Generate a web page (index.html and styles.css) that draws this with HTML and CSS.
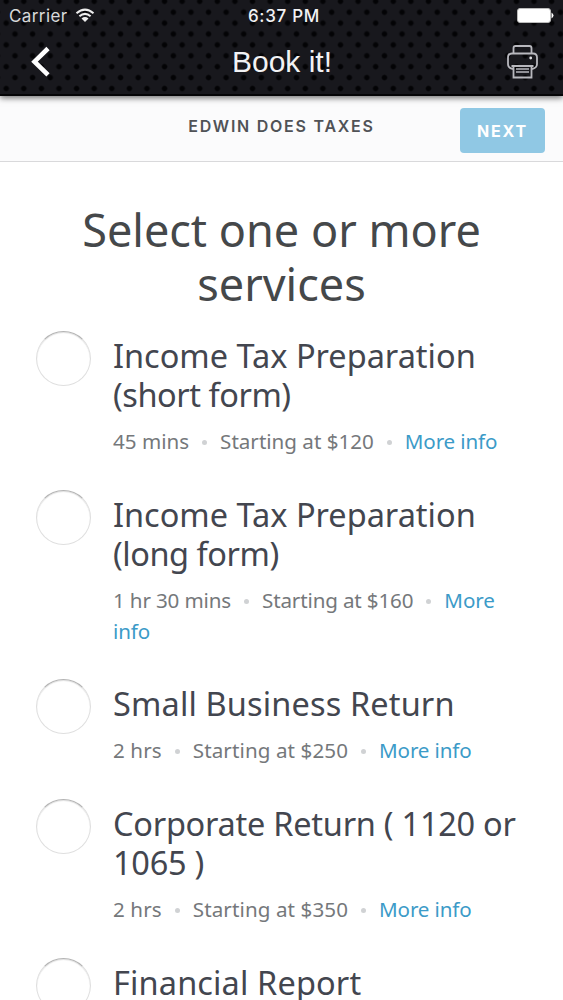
FILE: index.html
```
<!DOCTYPE html>
<html lang="en">

<head>
    <meta charset="UTF-8">
    <meta name="viewport" content="width=device-width, initial-scale=1.0">
    <title>Book it!</title>
    <link rel="stylesheet" href="styles.css">
</head>

<body>
    <header class="top">
        <div class="status">
            <div class="carrier">
                <span>Carrier</span>
                <svg width="20" height="15" viewBox="0 0 20 15">
                    <path d="M1.5 5.2 Q10 -2 18.5 5.2 M4.4 8.2 Q10 3.6 15.6 8.2" fill="none" stroke="#eee" stroke-width="2" />
                    <path d="M6.5 10.5 Q10 7.6 13.5 10.5 L10 14 Z" fill="#eee" />
                </svg>
            </div>
            <span class="time">6:37 PM</span>
            <svg class="battery" width="38" height="15" viewBox="0 0 38 15">
                <rect x="0.5" y="0.5" width="33" height="14" rx="2.5" fill="#fff" stroke="#bbb" />
                <path d="M34.5 4.5 Q38.5 7.5 34.5 10.5 Z" fill="#fff" />
            </svg>
        </div>
        <div class="nav">
            <svg class="back" width="22" height="32" viewBox="0 0 22 32">
                <path d="M20 2.5 L6.5 15.7 L20 28.9" fill="none" stroke="#fff" stroke-width="4.6" />
            </svg>
            <span class="nav-title">Book it!</span>
            <svg class="print" width="32" height="34" viewBox="0 0 32 34" fill="none" stroke="#b8b8be" stroke-width="1.8">
                <path d="M6.5 8.5 V3 Q6.5 1 8.5 1 H22.5 Q24.5 1 24.5 3 V8.5" />
                <path d="M6 24 Q1 23 1 19 V12.5 Q1 8.5 5 8.5 H26 Q30 8.5 30 12.5 V19 Q30 23 25 24" />
                <path d="M4.5 21 H26.5 M6.5 21 V32.5 H24.5 V21" />
                <path d="M9 24 H22 M9 27 H22" stroke-width="1.4" />
                <circle cx="23.7" cy="13" r="1.4" fill="#e0e0e4" stroke="none" />
            </svg>
        </div>
    </header>

    <div class="bar">
        <span class="business">EDWIN DOES TAXES</span>
        <button class="next">NEXT</button>
    </div>

    <main>
        <h1>Select one or more services</h1>
        <ul class="services">
            <li class="service">
                <span class="radio"></span>
                <div>
                    <h2>Income Tax Preparation <span class="narrow">(short form)</span></h2>
                    <p>45 mins<i class="dot"></i>Starting at $120<i class="dot"></i><a>More info</a></p>
                </div>
            </li>
            <li class="service two-line">
                <span class="radio"></span>
                <div>
                    <h2>Income Tax Preparation <span class="narrow">(long form)</span></h2>
                    <p>1 hr 30 mins<i class="dot"></i>Starting at $160<i class="dot"></i><a>More info</a></p>
                </div>
            </li>
            <li class="service short">
                <span class="radio"></span>
                <div>
                    <h2 class="wide">Small Business Return</h2>
                    <p>2 hrs<i class="dot"></i>Starting at $250<i class="dot"></i><a>More info</a></p>
                </div>
            </li>
            <li class="service short">
                <span class="radio"></span>
                <div>
                    <h2 class="tight">Corporate Return ( 1120 or 1065 )</h2>
                    <p>2 hrs<i class="dot"></i>Starting at $350<i class="dot"></i><a>More info</a></p>
                </div>
            </li>
            <li class="service">
                <span class="radio"></span>
                <div>
                    <h2 class="wide">Financial Report</h2>
                </div>
            </li>
        </ul>
    </main>
</body>

</html>
```
FILE: styles.css
```
* {
    box-sizing: border-box;
}

body {
    margin: 0;
    height: 1000px;
    overflow: hidden;
    background-color: #fff;
    font-family: "Noto Sans", sans-serif;
}

.top {
    height: 96px;
    color: #f2f2f4;
    background-color: #18181d;
    /* Perforated pattern */
    background-image:
        radial-gradient(circle at 4.4px 5.5px, #030305 1.9px, transparent 3.4px),
        radial-gradient(circle at 13.2px 16.4px, #030305 1.9px, transparent 3.4px);
    background-size: 17.6px 21.8px;
    background-position: 10.6px 6.7px;
    border-bottom: 2px solid #050507;
    box-shadow: 0 2px 6px rgba(0, 0, 0, 0.55);
    position: relative;
}

.status {
    display: grid;
    grid-template-columns: 1fr auto 1fr;
    align-items: center;
    height: 31px;
    padding: 0 8px 0 9px;
    font-family: Inter, sans-serif;
    font-size: 17px;
}

.carrier {
    display: flex;
    align-items: center;
    gap: 7px;
    color: #d8d8da;
    letter-spacing: 0.4px;
}

.time {
    padding-left: 4px;
    font-weight: 500;
    letter-spacing: 0.7px;
}

.battery {
    justify-self: end;
}

.nav {
    display: grid;
    grid-template-columns: 1fr auto 1fr;
    align-items: center;
    height: 62px;
    padding: 0 24px 0 28px;
}

.nav-title {
    padding-right: 3px;
    font-family: "Liberation Sans", sans-serif;
    font-size: 30px;
}

.print {
    justify-self: end;
}

.bar {
    display: grid;
    grid-template-columns: 1fr auto 1fr;
    align-items: center;
    height: 66px;
    padding: 4px 18px 0 18px;
    background-color: #fbfbfc;
    border-bottom: 1px solid #d9d9db;
}

.business {
    grid-column: 2;
    padding-bottom: 9px;
    font-family: Inter, sans-serif;
    font-size: 16px;
    font-weight: 600;
    letter-spacing: 1.75px;
    color: #505256;
}

.next {
    justify-self: end;
    width: 85px;
    height: 45px;
    padding: 0;
    border: 0;
    border-radius: 4px;
    background-color: #90c8e4;
    color: #fff;
    font-family: Inter, sans-serif;
    font-size: 16px;
    font-weight: 700;
    letter-spacing: 1.8px;
}

h1 {
    margin: 41px 60px 26px;
    text-align: center;
    font-size: 45px;
    font-weight: 400;
    line-height: 54px;
    color: #45484a;
}

.services {
    margin: 0;
    padding: 0;
    list-style: none;
}

.service {
    display: flex;
    align-items: flex-start;
    gap: 22px;
    padding: 0 30px 39px 36px;
}

.two-line {
    padding-bottom: 37px;
}

.two-line p {
    letter-spacing: -0.15px;
}

.short {
    padding-bottom: 38px;
}

.short p {
    margin-top: 12.5px;
    letter-spacing: 0.1px;
}

.radio {
    flex: none;
    width: 55px;
    height: 55px;
    margin-top: -6px;
    border: 1px solid #dfdfdf;
    border-top-color: #b4b4b4;
    border-radius: 50%;
    box-shadow: inset 0 1px 1px rgba(0, 0, 0, 0.12);
}

h2 {
    margin: -1px 0 0;
    font-size: 32.5px;
    font-weight: 400;
    line-height: 39px;
    color: #43464f;
}

.narrow {
    letter-spacing: -0.45px;
}

.wide {
    letter-spacing: 0.14px;
}

.tight {
    letter-spacing: -0.25px;
}

p {
    margin: 11.5px 0 0;
    font-size: 20.6px;
    line-height: 31.5px;
    color: #75787b;
}

.dot {
    display: inline-block;
    width: 5px;
    height: 5px;
    margin: 0 13px;
    border-radius: 50%;
    background-color: #d0d2d4;
    vertical-align: 4px;
}

a {
    color: #3c9bc8;
    letter-spacing: -0.15px;
}
```
